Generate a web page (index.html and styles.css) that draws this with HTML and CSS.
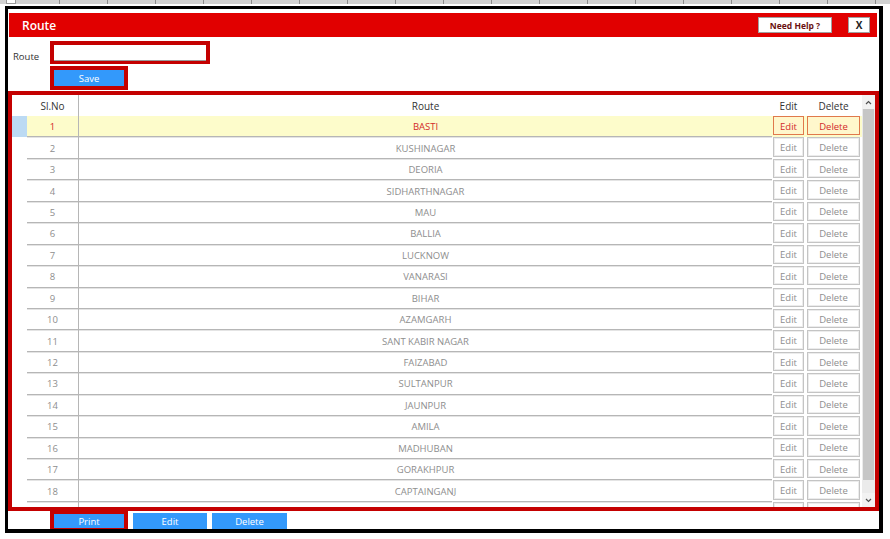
FILE: index.html
```html
<!DOCTYPE html>
<html lang="en">
<head>
  <meta charset="UTF-8">
  <meta name="viewport" content="width=device-width, initial-scale=1.0">
  <title>Route</title>
  <link rel="stylesheet" href="styles.css">
</head>
<body>
  <div class="ruler"><span class="ruler-box"></span></div>

  <div class="window">
    <div class="titlebar">
      <span class="title">Route</span>
      <button class="help-btn">Need Help ?</button>
      <button class="close-btn">X</button>
    </div>

    <div class="form">
      <div class="form-row">
        <label class="form-label" for="route">Route</label>
        <span class="red-frame input-frame"><input type="text" id="route" class="route-input"></span>
      </div>
      <div class="form-row save-row">
        <span class="red-frame"><button class="blue-btn">Save</button></span>
      </div>
    </div>

    <div class="grid-frame">
      <div class="grid">
        <div class="grid-rows">
          <div class="row head">
            <span class="cell"></span>
            <span class="cell num">Sl.No</span>
            <span class="cell name">Route</span>
            <span class="cell">Edit</span>
            <span class="cell">Delete</span>
          </div>
          <div class="row selected">
            <span class="cell sel"></span>
            <span class="cell num">1</span>
            <span class="cell name">BASTI</span>
            <span class="cell act"><span class="act-btn">Edit</span></span>
            <span class="cell act del"><span class="act-btn">Delete</span></span>
          </div>
          <div class="row">
            <span class="cell sel"></span>
            <span class="cell num">2</span>
            <span class="cell name">KUSHINAGAR</span>
            <span class="cell act"><span class="act-btn">Edit</span></span>
            <span class="cell act del"><span class="act-btn">Delete</span></span>
          </div>
          <div class="row">
            <span class="cell sel"></span>
            <span class="cell num">3</span>
            <span class="cell name">DEORIA</span>
            <span class="cell act"><span class="act-btn">Edit</span></span>
            <span class="cell act del"><span class="act-btn">Delete</span></span>
          </div>
          <div class="row">
            <span class="cell sel"></span>
            <span class="cell num">4</span>
            <span class="cell name">SIDHARTHNAGAR</span>
            <span class="cell act"><span class="act-btn">Edit</span></span>
            <span class="cell act del"><span class="act-btn">Delete</span></span>
          </div>
          <div class="row">
            <span class="cell sel"></span>
            <span class="cell num">5</span>
            <span class="cell name">MAU</span>
            <span class="cell act"><span class="act-btn">Edit</span></span>
            <span class="cell act del"><span class="act-btn">Delete</span></span>
          </div>
          <div class="row">
            <span class="cell sel"></span>
            <span class="cell num">6</span>
            <span class="cell name">BALLIA</span>
            <span class="cell act"><span class="act-btn">Edit</span></span>
            <span class="cell act del"><span class="act-btn">Delete</span></span>
          </div>
          <div class="row">
            <span class="cell sel"></span>
            <span class="cell num">7</span>
            <span class="cell name">LUCKNOW</span>
            <span class="cell act"><span class="act-btn">Edit</span></span>
            <span class="cell act del"><span class="act-btn">Delete</span></span>
          </div>
          <div class="row">
            <span class="cell sel"></span>
            <span class="cell num">8</span>
            <span class="cell name">VANARASI</span>
            <span class="cell act"><span class="act-btn">Edit</span></span>
            <span class="cell act del"><span class="act-btn">Delete</span></span>
          </div>
          <div class="row">
            <span class="cell sel"></span>
            <span class="cell num">9</span>
            <span class="cell name">BIHAR</span>
            <span class="cell act"><span class="act-btn">Edit</span></span>
            <span class="cell act del"><span class="act-btn">Delete</span></span>
          </div>
          <div class="row">
            <span class="cell sel"></span>
            <span class="cell num">10</span>
            <span class="cell name">AZAMGARH</span>
            <span class="cell act"><span class="act-btn">Edit</span></span>
            <span class="cell act del"><span class="act-btn">Delete</span></span>
          </div>
          <div class="row">
            <span class="cell sel"></span>
            <span class="cell num">11</span>
            <span class="cell name">SANT KABIR NAGAR</span>
            <span class="cell act"><span class="act-btn">Edit</span></span>
            <span class="cell act del"><span class="act-btn">Delete</span></span>
          </div>
          <div class="row">
            <span class="cell sel"></span>
            <span class="cell num">12</span>
            <span class="cell name">FAIZABAD</span>
            <span class="cell act"><span class="act-btn">Edit</span></span>
            <span class="cell act del"><span class="act-btn">Delete</span></span>
          </div>
          <div class="row">
            <span class="cell sel"></span>
            <span class="cell num">13</span>
            <span class="cell name">SULTANPUR</span>
            <span class="cell act"><span class="act-btn">Edit</span></span>
            <span class="cell act del"><span class="act-btn">Delete</span></span>
          </div>
          <div class="row">
            <span class="cell sel"></span>
            <span class="cell num">14</span>
            <span class="cell name">JAUNPUR</span>
            <span class="cell act"><span class="act-btn">Edit</span></span>
            <span class="cell act del"><span class="act-btn">Delete</span></span>
          </div>
          <div class="row">
            <span class="cell sel"></span>
            <span class="cell num">15</span>
            <span class="cell name">AMILA</span>
            <span class="cell act"><span class="act-btn">Edit</span></span>
            <span class="cell act del"><span class="act-btn">Delete</span></span>
          </div>
          <div class="row">
            <span class="cell sel"></span>
            <span class="cell num">16</span>
            <span class="cell name">MADHUBAN</span>
            <span class="cell act"><span class="act-btn">Edit</span></span>
            <span class="cell act del"><span class="act-btn">Delete</span></span>
          </div>
          <div class="row">
            <span class="cell sel"></span>
            <span class="cell num">17</span>
            <span class="cell name">GORAKHPUR</span>
            <span class="cell act"><span class="act-btn">Edit</span></span>
            <span class="cell act del"><span class="act-btn">Delete</span></span>
          </div>
          <div class="row">
            <span class="cell sel"></span>
            <span class="cell num">18</span>
            <span class="cell name">CAPTAINGANJ</span>
            <span class="cell act"><span class="act-btn">Edit</span></span>
            <span class="cell act del"><span class="act-btn">Delete</span></span>
          </div>
          <!-- next row, scrolled out of view -->
          <div class="row">
            <span class="cell sel"></span>
            <span class="cell num"></span>
            <span class="cell name"></span>
            <span class="cell act"><span class="act-btn"></span></span>
            <span class="cell act del"><span class="act-btn"></span></span>
          </div>
        </div>

        <div class="scrollbar">
          <span class="scroll-arrow">
            <svg width="7" height="5" viewBox="0 0 7 5"><polyline points="1,4 3.5,1.5 6,4" fill="none" stroke="#505050" stroke-width="1.2"/></svg>
          </span>
          <span class="scroll-thumb"></span>
          <span class="scroll-track"></span>
          <span class="scroll-arrow">
            <svg width="7" height="5" viewBox="0 0 7 5"><polyline points="1,1 3.5,3.5 6,1" fill="none" stroke="#505050" stroke-width="1.2"/></svg>
          </span>
        </div>
      </div>
    </div>

    <div class="footer">
      <span class="red-frame print-frame"><button class="blue-btn print-btn">Print</button></span>
      <button class="blue-btn footer-btn">Edit</button>
      <button class="blue-btn footer-btn">Delete</button>
    </div>
  </div>
</body>
</html>
```

FILE: styles.css
```css
body {
  margin: 0;
  font-family: 'Open Sans', 'Noto Sans', Arial, sans-serif;
  font-size: 9.5px;
  color: #333;
  background-color: white;
}
button {
  font-family: inherit;
  cursor: pointer;
}

/* strip along the top edge */
.ruler {
  height: 4px;
  margin-bottom: 2px;
  background-color: #d2d2d2;
  background-image: repeating-linear-gradient(to right, transparent 0 47px, #8c8c8c 47px 48px);
  background-position: 12px 0;
  position: relative;
}
.ruler-box {
  position: absolute;
  left: 6px;
  top: 0;
  width: 8px;
  height: 3px;
  background: white;
  border: 1px solid #9a9a9a;
  border-top: none;
}

.window {
  box-sizing: border-box;
  width: 878px;
  height: 527px;
  margin-left: 5px;
  border: 3px solid #000;
  border-right-width: 4px;
  border-bottom-width: 4px;
  display: flex;
  flex-direction: column;
  overflow: hidden;
  background: white;
}

.titlebar {
  height: 24px;
  margin: 4px 2px 0 1px;
  padding: 0 7px 0 13px;
  background-color: #e10000;
  display: flex;
  align-items: center;
  flex-shrink: 0;
}
.title {
  flex: 1;
  color: white;
  font-size: 12px;
  font-weight: 600;
}
.help-btn {
  width: 74px;
  height: 16px;
  padding: 0;
  background: white;
  border: 1px solid #a0a0a0;
  color: #6a1010;
  font-size: 8.5px;
  font-weight: 700;
}
.close-btn {
  width: 22px;
  height: 16px;
  margin-left: 16px;
  padding: 0;
  background: white;
  border: 1px solid #a0a0a0;
  color: #222;
  font-size: 10px;
  font-weight: 700;
}

/* add form */
.form {
  padding: 4px 0 1px 5px;
  flex-shrink: 0;
}
.form-row {
  display: flex;
  align-items: center;
}
.form-label {
  width: 37px;
  padding-top: 7px;
  font-size: 9.5px;
  color: #333;
}
.save-row {
  margin-top: 2px;
  padding-left: 37px;
}
.red-frame {
  display: inline-flex;
  border: 4px solid #c40000;
}
.input-frame {
  border-bottom-width: 3px;
}
.route-input {
  box-sizing: border-box;
  width: 152px;
  height: 16px;
  margin: 0;
  padding: 0 3px;
  border: none;
  border-bottom: 1px solid #9a9a9a;
  outline: none;
  background: white;
}
.blue-btn {
  width: 70px;
  height: 16px;
  padding: 0;
  border: none;
  background-color: #3399fb;
  color: white;
  font-size: 9.5px;
}

/* route list */
.grid-frame {
  box-sizing: border-box;
  height: 420px;
  border: 4px solid #c40000;
  flex-shrink: 0;
}
.grid {
  display: flex;
  height: 100%;
  overflow: hidden;
}
.grid-rows {
  width: 850px;
  overflow: hidden;
}
.row {
  display: grid;
  grid-template-columns: 15px 52px 693px 33px 57px;
  height: 21.45px;
  color: #8e8e8e;
}
.row.head {
  height: 21px;
  color: #333;
  font-size: 10px;
}
.cell {
  display: flex;
  align-items: center;
  justify-content: center;
  padding-top: 1px;
  overflow: hidden;
  white-space: nowrap;
}
.num,
.name {
  border-bottom: 1px solid #b6b6b6;
  box-shadow: 0 1px 0 #e4e4e4;
}
.num {
  border-right: 1px solid #b6b6b6;
}
.head .cell {
  padding-top: 0;
}
.head .num,
.head .name {
  border-bottom: none;
  box-shadow: none;
}
.act {
  align-items: flex-start;
  padding: 0 1px;
}
.act.del {
  padding: 0 2px;
}
.act-btn {
  box-sizing: border-box;
  flex: 1;
  height: 19.4px;
  display: flex;
  align-items: center;
  justify-content: center;
  padding-top: 1px;
  background: white;
  border: 1px solid #c4c4c4;
  box-shadow: inset 0 0 0 1px #ececec;
}

.selected {
  color: #d22a2a;
}
.selected .sel {
  background-color: #bcdaf3;
}
.selected .num,
.selected .name {
  background-color: #fdfccb;
}
.selected .act {
  background-color: #fdfccb;
}
.selected .act-btn {
  background-color: #fff7cc;
  border-color: #e0794c;
  box-shadow: none;
}

.scrollbar {
  width: 13px;
  display: flex;
  flex-direction: column;
  background-color: #ebebeb;
}
.scroll-arrow {
  height: 14px;
  display: flex;
  align-items: center;
  justify-content: center;
  background-color: #f2f2f2;
}
.scroll-thumb {
  height: 371px;
  margin: 0 1px;
  background-color: #c6c6c6;
}
.scroll-track {
  flex: 1;
}

/* bottom buttons */
.footer {
  display: flex;
  align-items: flex-start;
  padding-left: 42px;
  gap: 5px;
}
.print-frame {
  border-width: 3px 4px;
}
.print-btn {
  height: 14px;
}
.footer-btn {
  width: 74px;
  height: 17px;
  margin-top: 2px;
}
.footer-btn + .footer-btn {
  width: 75px;
}
```
